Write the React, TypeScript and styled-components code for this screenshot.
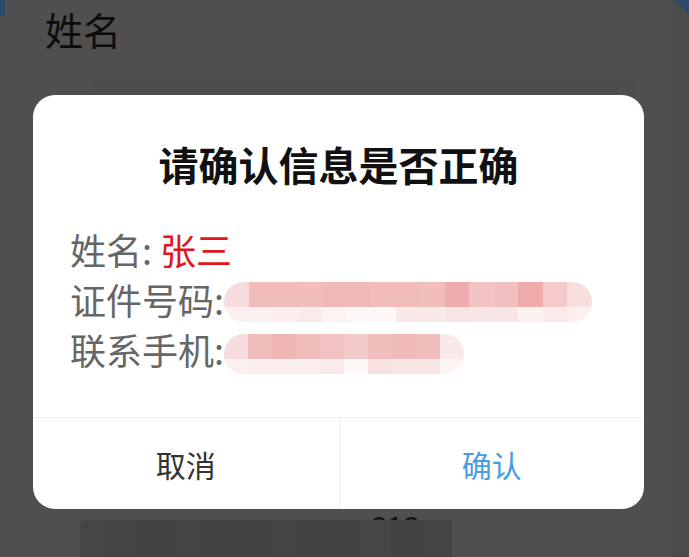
import styled, { createGlobalStyle } from 'styled-components'

const GlobalStyle = createGlobalStyle`
  html, body {
    margin: 0;
    padding: 0;
    background: #4f4f4f;
    font-family: "Noto Sans CJK SC", "Noto Sans", sans-serif;
  }
`;

const Page = styled.div`
  position: relative;
  width: 689px;
  height: 557px;
  overflow: hidden;
  display: grid;
  grid-template-columns: 1fr 17px;
  background: #4f4f4f;
`;

const Content = styled.div`
  display: flex;
  flex-direction: column;
  padding: 3px 0 0 45px;
`;

const SideStrip = styled.div`
  background: #4b4b4b;
`;

const Heading = styled.div`
  font-size: 38px;
  line-height: 52px;
  color: #0c0c0c;
`;

const Card = styled.div`
  margin: 25px 37px 0 47px;
  height: 420px;
  background: #4d4d4d;
`;

const Corner = styled.div<{ $side: 'left' | 'right' }>`
  position: absolute;
  top: 0;
  ${({ $side }) => $side === 'left'
    ? 'left: 0; width: 5px; height: 16px; background: #2d4a6d;'
    : 'right: 0; width: 14px; height: 16px; background: linear-gradient(225deg, #2d4a6d 50%, transparent 50%);'
  }
`;

const PeekText = styled.div`
  position: absolute;
  left: 370px;
  top: 510px;
  font-size: 30px;
  color: #111;
  font-family: "Liberation Sans", sans-serif;
`;

const BlurBlock = styled.div`
  position: absolute;
  left: 80px;
  top: 520px;
  width: 372px;
  height: 40px;
  display: flex;
  border-radius: 4px 4px 0 0;
  overflow: hidden;
`;

const BlurCell = styled.div<{ $c: string }>`
  flex: 1;
  background: ${({ $c }) => $c};
`;

const Overlay = styled.div`
  position: absolute;
  inset: 0;
  padding: 95px 0 0 33px;
`;

const Modal = styled.div`
  width: 611px;
  background: #fff;
  border-radius: 22px;
  overflow: hidden;
  display: flex;
  flex-direction: column;
`;

const Title = styled.div`
  padding-top: 41px;
  font-size: 40px;
  line-height: 56px;
  font-weight: 700;
  color: #111;
  text-align: center;
`;

const Body = styled.div`
  padding: 32px 0 43px 37px;
  display: flex;
  flex-direction: column;
`;

const Line = styled.div`
  display: flex;
  align-items: center;
  height: 50px;
  font-size: 36px;
  color: #666;
  white-space: pre;
`;

const Red = styled.span`
  color: #e3141b;
`;

const Mosaic = styled.div<{ $w: number; $shift: number }>`
  display: flex;
  flex-direction: column;
  width: ${({ $w }) => $w}px;
  margin-top: ${({ $shift }) => $shift}px;
  border-radius: 20px;
  overflow: hidden;
`;

const MosaicRow = styled.div<{ $h: number }>`
  display: flex;
  height: ${({ $h }) => $h}px;
`;

const MosaicCell = styled.div<{ $c: string }>`
  flex: 1;
  background: ${({ $c }) => $c};
`;

const Footer = styled.div`
  display: grid;
  grid-template-columns: 1fr 1fr;
  height: 91px;
  border-top: 1px solid #eeeeee;
`;

const FooterButton = styled.div<{ $primary?: boolean }>`
  display: flex;
  align-items: center;
  justify-content: center;
  font-size: 30px;
  color: ${({ $primary }) => $primary ? '#4a9be2' : '#333'};
  ${({ $primary }) => $primary && 'border-left: 1px solid #eeeeee;'}
`;

const idTop = ['#f6dcdc', '#f1bcbc', '#f1bcbc', '#f1bdbd', '#f0b9b9', '#f0b9b9', '#f1bcbc', '#f1bcbc', '#f1bebe', '#eeacac', '#f2c3c3', '#f1bfbf', '#efaaaa', '#f4caca', '#f7dfdf']
const idBottom = ['#fbf0f0', '#fbf0f0', '#faeeee', '#f9ebeb', '#fcf3f3', '#fdf7f7', '#fdf7f7', '#f9e9e9', '#f9e9e9', '#f7e4e4', '#f8e6e6', '#f8e6e6', '#fcf2f2', '#faeaea', '#fbefef']
const phoneTop = ['#f6dcdc', '#f1bcbc', '#efb4b4', '#f1bcbc', '#f2c2c2', '#f3caca', '#f1bcbc', '#f0b9b9', '#f1bdbd', '#fae9e9']
const phoneBottom = ['#fbf0f0', '#faeeee', '#faeeee', '#faeeee', '#f9ebeb', '#fdf7f7', '#f6e0e0', '#f8e6e6', '#f8e6e6', '#fcf3f3']
const blurCols = ['#454545', '#444444', '#434343', '#444444', '#424242', '#434343', '#444444', '#424242', '#434343', '#454545', '#434343', '#444444']

function Redacted({ top, bottom, width, shift }: { top: string[]; bottom: string[]; width: number; shift: number }) {
  return (
    <Mosaic $w={width} $shift={shift}>
      <MosaicRow $h={25}>
        {top.map((c, i) => <MosaicCell key={i} $c={c} />)}
      </MosaicRow>
      <MosaicRow $h={15}>
        {bottom.map((c, i) => <MosaicCell key={i} $c={c} />)}
      </MosaicRow>
    </Mosaic>
  )
}

export default function App() {
  return (
    <>
      <GlobalStyle />
      <Page>
        <Content>
          <Heading>姓名</Heading>
          <Card />
        </Content>
        <SideStrip />
        <Corner $side="left" />
        <Corner $side="right" />
        <PeekText>619</PeekText>
        <BlurBlock>
          {blurCols.map((c, i) => <BlurCell key={i} $c={c} />)}
        </BlurBlock>
        <Overlay>
          <Modal>
            <Title>请确认信息是否正确</Title>
            <Body>
              <Line>姓名: <Red>张三</Red></Line>
              <Line>
                证件号码:
                <Redacted top={idTop} bottom={idBottom} width={368} shift={6} />
              </Line>
              <Line>
                联系手机:
                <Redacted top={phoneTop} bottom={phoneBottom} width={240} shift={10} />
              </Line>
            </Body>
            <Footer>
              <FooterButton>取消</FooterButton>
              <FooterButton $primary>确认</FooterButton>
            </Footer>
          </Modal>
        </Overlay>
      </Page>
    </>
  )
}
